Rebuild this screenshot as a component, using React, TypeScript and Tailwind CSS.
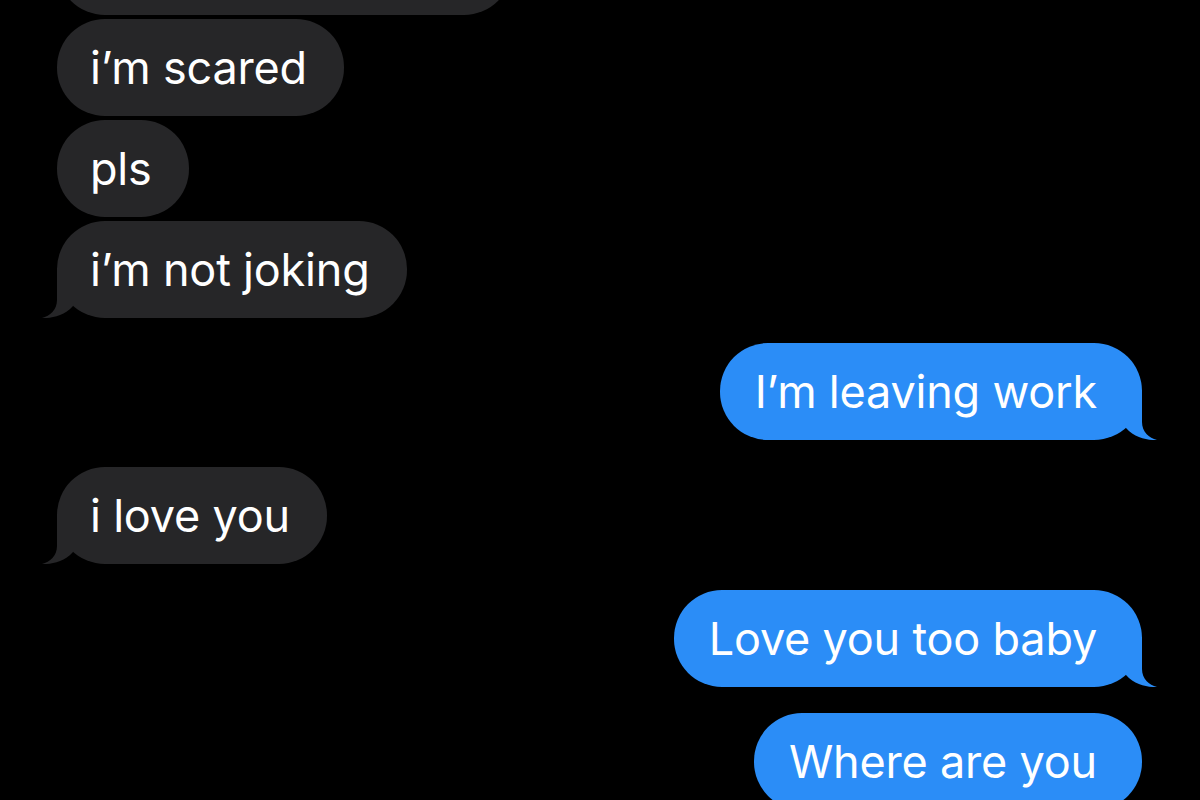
type Side = 'in' | 'out'

type Msg = {
  text: string
  side: Side
  tail?: boolean
  gap: string
}

const MESSAGES: Msg[] = [
  { text: 'i’m scared', side: 'in', gap: 'mt-[4px]' },
  { text: 'pls', side: 'in', gap: 'mt-[4px]' },
  { text: 'i’m not joking', side: 'in', tail: true, gap: 'mt-[4px]' },
  { text: 'I’m leaving work', side: 'out', tail: true, gap: 'mt-[25px]' },
  { text: 'i love you', side: 'in', tail: true, gap: 'mt-[27px]' },
  { text: 'Love you too baby', side: 'out', tail: true, gap: 'mt-[26px]' },
  { text: 'Where are you', side: 'out', gap: 'mt-[26px]' },
]

const Tail = ({ side }: { side: Side }) => (
  <svg
    width="40"
    height="50"
    viewBox="0 0 40 50"
    className={
      side === 'in'
        ? 'absolute bottom-0 left-[-15px] text-[#262628]'
        : 'absolute bottom-0 right-[-15px] -scale-x-100 text-[#2b8df7]'
    }
  >
    <path d="M15 0 L15 32 C15 42 8 48 0 50 C9 50.5 22 48 31 38 L31 0 Z" fill="currentColor" />
  </svg>
)

const Bubble = ({ msg }: { msg: Msg }) => {
  const incoming = msg.side === 'in'
  return (
    <div
      className={
        incoming
          ? `relative ${msg.gap} ml-[57px] flex h-[97px] shrink-0 items-center self-start rounded-[48px] bg-[#262628] pl-[33px] pr-[37px]`
          : `relative ${msg.gap} mr-[58px] flex h-[97px] shrink-0 items-center self-end rounded-[48px] bg-[#2b8df7] pl-[35px] pr-[45px]`
      }
    >
      {msg.tail && <Tail side={msg.side} />}
      <span className="relative whitespace-nowrap text-[45px] leading-none tracking-[-0.2px] text-white">
        {msg.text}
      </span>
    </div>
  )
}

export default function App() {
  return (
    <div
      className="flex h-[800px] w-[1200px] flex-col overflow-hidden bg-black"
      style={{ fontFamily: 'Inter, "Noto Sans", "Liberation Sans", sans-serif' }}
    >
      {/* previous bubble, cut off by the top edge */}
      <div className="-mt-[82px] ml-[57px] h-[97px] w-[455px] shrink-0 self-start rounded-[48px] bg-[#262628]" />
      {MESSAGES.map((m, i) => (
        <Bubble key={i} msg={m} />
      ))}
    </div>
  )
}
